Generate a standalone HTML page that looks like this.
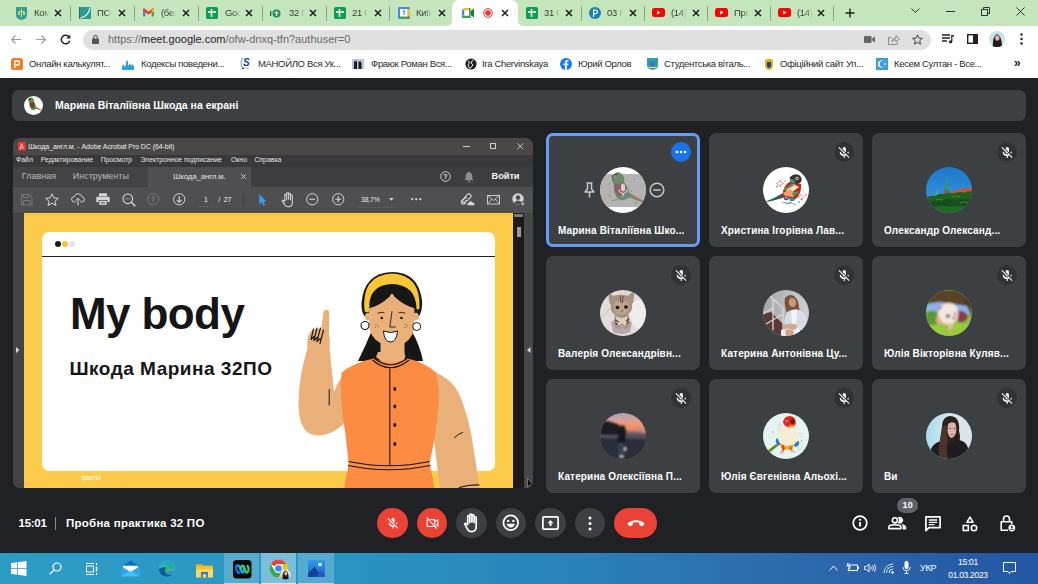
<!DOCTYPE html>
<html lang="uk">
<head>
<meta charset="utf-8">
<title>Meet</title>
<style>
*{box-sizing:border-box;margin:0;padding:0}
html,body{width:1038px;height:584px;overflow:hidden;background:#202124;font-family:"Liberation Sans",sans-serif}
.abs{position:absolute}
svg{position:absolute;overflow:visible}
#tabstrip{position:absolute;left:0;top:0;width:1038px;height:26px;background:#c5e6bd}
#toolbar{position:absolute;left:0;top:26px;width:1038px;height:26px;background:#fff}
#bookmarks{position:absolute;left:0;top:52px;width:1038px;height:26px;background:#fff}
#meet{position:absolute;left:0;top:78px;width:1038px;height:475px;background:#202124}
#taskbar{position:absolute;left:0;top:553px;width:1038px;height:31px;background:linear-gradient(90deg,#2c9cc5 0%,#2a96c3 32%,#2a80ba 56%,#2c66ab 80%,#2357a4 100%)}
.tt{position:absolute;top:7px;height:14px;font-size:9.5px;color:#3a3a3a;white-space:nowrap;overflow:hidden;letter-spacing:-0.3px}
.tx{position:absolute;top:9px;width:8px;height:8px}
.sep{position:absolute;top:6px;width:1px;height:15px;background:#86a481}
.bm{position:absolute;top:58px;font-size:9.5px;line-height:12px;color:#2a2a2a;white-space:nowrap;letter-spacing:-0.33px}
#banner{position:absolute;left:12px;top:12px;width:1014px;height:31px;background:#3c4043;border-radius:7px}
#banner .txt{position:absolute;left:43px;top:9px;font-size:10.500px;line-height:13px;font-weight:bold;color:#fff;white-space:nowrap}
.tile{position:absolute;width:154px;height:114px;background:#3c4043;border-radius:7px}
.tile .nm{position:absolute;left:12px;top:92px;font-size:10px;line-height:12px;font-weight:bold;color:#fff;white-space:nowrap;letter-spacing:0.15px}
.tile .av{position:absolute;left:54px;top:34px;width:46px;height:46px;border-radius:50%;overflow:hidden}
.tile .mic{position:absolute;left:125px;top:9px;width:20px;height:20px;border-radius:50%;background:#303236}
</style>
</head>
<body>
<div id="tabstrip">
<div class="abs" style="left:452px;top:0;width:66px;height:26px;background:#fff;border-radius:7px 7px 0 0"></div>
<svg style="left:446px;top:20px" width="6" height="6" viewBox="0 0 6 6"><path d="M6 0V6H0Q6 6 6 0Z" fill="#fff"/></svg>
<svg style="left:518px;top:20px" width="6" height="6" viewBox="0 0 6 6"><path d="M0 0V6H6Q0 6 0 0Z" fill="#fff"/></svg>
<svg style="left:16px;top:7px" width="11" height="13" viewBox="0 0 11 13"><path d="M0 0H11V8Q11 12 5.5 13Q0 12 0 8Z" fill="#2f9f9a"/><path d="M5.5 2V10M3 4.5H8M3 4.5L2.4 7.5H3.8ZM8 4.500L7.300 7.5H8.700Z" stroke="#f3e27a" stroke-width="0.9" fill="none"/></svg>
<div class="tt" style="left:34px;width:16px;-webkit-mask-image:linear-gradient(90deg,#000 55%,transparent 98%)">Ком</div>
<svg class="tx" style="left:54px" viewBox="0 0 8 8"><path d="M1 1L7 7M7 1L1 7" stroke="#1f1f1f" stroke-width="1.5" fill="none"/></svg>
<div class="sep" style="left:70px"></div>
<svg style="left:79px;top:7px" width="12" height="12" viewBox="0 0 12 12"><rect width="12" height="12" fill="#2f9c93"/><rect width="1" height="12" fill="#1c6e66"/><path d="M1.500 11Q9.500 9.500 11 0.500" stroke="#fff" stroke-width="1.100" fill="none"/></svg>
<div class="tt" style="left:97px;width:16px;-webkit-mask-image:linear-gradient(90deg,#000 55%,transparent 98%)">ПС-</div>
<svg class="tx" style="left:118px" viewBox="0 0 8 8"><path d="M1 1L7 7M7 1L1 7" stroke="#1f1f1f" stroke-width="1.5" fill="none"/></svg>
<div class="sep" style="left:134px"></div>
<svg style="left:143px;top:8px" width="11" height="9" viewBox="0 0 11 9"><path d="M0 1.200V8.500H2.300V3.400Z" fill="#4285f4"/><path d="M11 1.200V8.500H8.700V3.400Z" fill="#34a853"/><path d="M0 1.200Q0.300 0 1.600 0.400L5.500 3.500L9.400 0.400Q10.700 0 11 1.200V3.400L5.500 6.600L0 3.400Z" fill="#ea4335"/><path d="M8.700 1L11 1.200V3.400L8.700 4.800Z" fill="#fbbc04"/></svg>
<div class="tt" style="left:161px;width:16px;-webkit-mask-image:linear-gradient(90deg,#000 55%,transparent 98%)">(без</div>
<svg class="tx" style="left:182px" viewBox="0 0 8 8"><path d="M1 1L7 7M7 1L1 7" stroke="#1f1f1f" stroke-width="1.5" fill="none"/></svg>
<div class="sep" style="left:198px"></div>
<svg style="left:206px;top:7px" width="12" height="12" viewBox="0 0 12 12"><rect width="12" height="12" rx="1.500" fill="#0f9d58"/><path d="M5.500 2V10M2 5H10" stroke="#fff" stroke-width="1.500" fill="none"/></svg>
<div class="tt" style="left:225px;width:16px;-webkit-mask-image:linear-gradient(90deg,#000 55%,transparent 98%)">Goo</div>
<svg class="tx" style="left:245px" viewBox="0 0 8 8"><path d="M1 1L7 7M7 1L1 7" stroke="#1f1f1f" stroke-width="1.5" fill="none"/></svg>
<div class="sep" style="left:262px"></div>
<svg style="left:270px;top:9px" width="11" height="9" viewBox="0 0 11 9"><circle cx="6.500" cy="4.500" r="4" fill="#1e8e5a"/><path d="M6.500 2V7M4.500 4H8.500" stroke="#fff" stroke-width="1.200"/><rect x="0" y="2" width="1.300" height="5" fill="#1e6b47"/></svg>
<div class="tt" style="left:289px;width:16px;-webkit-mask-image:linear-gradient(90deg,#000 55%,transparent 98%)">32 Г</div>
<svg class="tx" style="left:309px" viewBox="0 0 8 8"><path d="M1 1L7 7M7 1L1 7" stroke="#1f1f1f" stroke-width="1.5" fill="none"/></svg>
<div class="sep" style="left:326px"></div>
<svg style="left:334px;top:7px" width="12" height="12" viewBox="0 0 12 12"><rect width="12" height="12" rx="1.500" fill="#0f9d58"/><path d="M5.500 2V10M2 5H10" stroke="#fff" stroke-width="1.500" fill="none"/></svg>
<div class="tt" style="left:352px;width:16px;-webkit-mask-image:linear-gradient(90deg,#000 55%,transparent 98%)">21 Г</div>
<svg class="tx" style="left:374px" viewBox="0 0 8 8"><path d="M1 1L7 7M7 1L1 7" stroke="#1f1f1f" stroke-width="1.5" fill="none"/></svg>
<div class="sep" style="left:389px"></div>
<svg style="left:398px;top:7px" width="12" height="12" viewBox="0 0 12 12"><rect width="12" height="12" rx="1.500" fill="#4285f4"/><rect x="9.500" y="2" width="2.500" height="8" fill="#fbbc04"/><rect x="2" y="9.500" width="8" height="2.500" fill="#34a853"/><path d="M9.500 9.500H12L9.500 12Z" fill="#ea4335"/><rect x="2" y="2" width="7.500" height="7.500" fill="#fff"/><path d="M5 4.500L6.200 3.700V8" stroke="#4285f4" stroke-width="1.100" fill="none"/></svg>
<div class="tt" style="left:416px;width:16px;-webkit-mask-image:linear-gradient(90deg,#000 55%,transparent 98%)">Київ</div>
<svg class="tx" style="left:438px" viewBox="0 0 8 8"><path d="M1 1L7 7M7 1L1 7" stroke="#1f1f1f" stroke-width="1.5" fill="none"/></svg>
<svg style="left:526px;top:7px" width="12" height="12" viewBox="0 0 12 12"><rect width="12" height="12" rx="1.500" fill="#0f9d58"/><path d="M5.500 2V10M2 5H10" stroke="#fff" stroke-width="1.500" fill="none"/></svg>
<div class="tt" style="left:544px;width:16px;-webkit-mask-image:linear-gradient(90deg,#000 55%,transparent 98%)">31 Г</div>
<svg class="tx" style="left:565px" viewBox="0 0 8 8"><path d="M1 1L7 7M7 1L1 7" stroke="#1f1f1f" stroke-width="1.5" fill="none"/></svg>
<div class="sep" style="left:581px"></div>
<svg style="left:589px;top:7px" width="12" height="12" viewBox="0 0 12 12"><circle cx="6" cy="6" r="6" fill="#1b7eb5"/><path d="M4.600 10V3H6.500Q8.400 3 8.400 4.800Q8.400 6.600 6.500 6.600H4.600" stroke="#fff" stroke-width="1.200" fill="none"/></svg>
<div class="tt" style="left:607px;width:16px;-webkit-mask-image:linear-gradient(90deg,#000 55%,transparent 98%)">03 F</div>
<svg class="tx" style="left:629px" viewBox="0 0 8 8"><path d="M1 1L7 7M7 1L1 7" stroke="#1f1f1f" stroke-width="1.5" fill="none"/></svg>
<div class="sep" style="left:644px"></div>
<svg style="left:652px;top:8px" width="13" height="9" viewBox="0 0 13 9"><rect width="13" height="9" rx="2.500" fill="#f00"/><path d="M5.200 2.500L8.500 4.500L5.200 6.500Z" fill="#fff"/></svg>
<div class="tt" style="left:671px;width:16px;-webkit-mask-image:linear-gradient(90deg,#000 55%,transparent 98%)">(14)</div>
<svg class="tx" style="left:692px" viewBox="0 0 8 8"><path d="M1 1L7 7M7 1L1 7" stroke="#1f1f1f" stroke-width="1.5" fill="none"/></svg>
<div class="sep" style="left:707px"></div>
<svg style="left:715px;top:8px" width="13" height="9" viewBox="0 0 13 9"><rect width="13" height="9" rx="2.500" fill="#f00"/><path d="M5.200 2.500L8.500 4.500L5.200 6.500Z" fill="#fff"/></svg>
<div class="tt" style="left:734px;width:16px;-webkit-mask-image:linear-gradient(90deg,#000 55%,transparent 98%)">Про</div>
<svg class="tx" style="left:754px" viewBox="0 0 8 8"><path d="M1 1L7 7M7 1L1 7" stroke="#1f1f1f" stroke-width="1.5" fill="none"/></svg>
<div class="sep" style="left:770px"></div>
<svg style="left:778px;top:8px" width="13" height="9" viewBox="0 0 13 9"><rect width="13" height="9" rx="2.500" fill="#f00"/><path d="M5.200 2.500L8.500 4.500L5.200 6.500Z" fill="#fff"/></svg>
<div class="tt" style="left:797px;width:16px;-webkit-mask-image:linear-gradient(90deg,#000 55%,transparent 98%)">(14)</div>
<svg class="tx" style="left:817px" viewBox="0 0 8 8"><path d="M1 1L7 7M7 1L1 7" stroke="#1f1f1f" stroke-width="1.5" fill="none"/></svg>
<div class="sep" style="left:833px"></div>
<svg style="left:462px;top:8px" width="12" height="10" viewBox="0 0 12 10"><path d="M0 2.500L2.500 0V2.500Z" fill="#ea4335"/><rect x="2.500" y="0" width="6" height="2.500" fill="#fbbc04"/><rect x="0" y="2.500" width="2.500" height="5" fill="#4285f4"/><rect x="0" y="7.500" width="8.500" height="2.500" fill="#34a853"/><path d="M8.500 0V10H7V0Z" fill="#34a853"/><path d="M8.500 3L12 0.500V9.500L8.500 7Z" fill="#188038"/><rect x="2.500" y="2.500" width="4.500" height="5" fill="#fff"/></svg>
<svg style="left:483px;top:8px" width="10" height="10" viewBox="0 0 10 10"><circle cx="5" cy="5" r="4.400" fill="none" stroke="#e53935" stroke-width="1"/><circle cx="5" cy="5" r="2.800" fill="#e53935"/></svg>
<svg class="tx" style="left:501px" viewBox="0 0 8 8"><path d="M1 1L7 7M7 1L1 7" stroke="#1f1f1f" stroke-width="1.5" fill="none"/></svg>
<svg style="left:845px;top:8px" width="10" height="10" viewBox="0 0 10 10"><path d="M5 0.500V9.500M0.500 5H9.500" stroke="#1f1f1f" stroke-width="1.400" fill="none"/></svg>
<svg style="left:911px;top:8px" width="9" height="6" viewBox="0 0 9 6"><path d="M0.500 0.500L4.500 4.500L8.500 0.500" stroke="#333" stroke-width="1" fill="none"/></svg>
<div class="abs" style="left:946px;top:11px;width:9px;height:1px;background:#333"></div>
<svg style="left:981px;top:7px" width="9" height="9" viewBox="0 0 9 9"><rect x="0.500" y="2.500" width="6" height="6" fill="none" stroke="#333" stroke-width="1"/><path d="M2.500 2.500V0.500H8.500V6.500H6.500" fill="none" stroke="#333" stroke-width="1"/></svg>
<svg style="left:1016px;top:7px" width="9" height="9" viewBox="0 0 9 9"><path d="M0.500 0.500L8.500 8.500M8.500 0.500L0.500 8.500" stroke="#333" stroke-width="1" fill="none"/></svg>
</div>
<div id="toolbar">
<svg style="left:11px;top:9px" width="10" height="9" viewBox="0 0 10 9"><path d="M10 4.500H1M4.500 0.500L0.700 4.500L4.500 8.500" stroke="#9a9a9a" stroke-width="1.200" fill="none"/></svg>
<svg style="left:36px;top:9px" width="10" height="9" viewBox="0 0 10 9"><path d="M0 4.500H9M5.500 0.500L9.300 4.500L5.500 8.500" stroke="#9a9a9a" stroke-width="1.200" fill="none"/></svg>
<svg style="left:60px;top:8px" width="11" height="11" viewBox="0 0 11 11"><path d="M9.300 3.300A4.300 4.300 0 1 0 9.700 6.800" stroke="#222" stroke-width="1.500" fill="none"/><path d="M10.300 0.600V4.600H6.300Z" fill="#222"/></svg>
<div class="abs" style="left:83px;top:3.500px;width:848px;height:20.500px;border-radius:10.250px;background:#e0e0e0"></div>
<svg style="left:92px;top:9px" width="7" height="9" viewBox="0 0 7 9"><rect x="0" y="3.500" width="7" height="5.500" rx="0.800" fill="#555"/><path d="M1.700 4V2.300A1.800 1.800 0 0 1 5.300 2.300V4" stroke="#555" stroke-width="1.100" fill="none"/></svg>
<div class="abs" id="url" style="left:108px;top:7px;font-size:11px;line-height:13px;color:#6a6a6a;white-space:nowrap;letter-spacing:0">https://<span style="color:#1f1f1f">meet.google.com</span>/ofw-dnxq-tfn?authuser=0</div>
<svg style="left:864px;top:10px" width="11" height="7" viewBox="0 0 11 7"><rect width="7.500" height="7" rx="1" fill="#666"/><path d="M7.500 3L11 0.500V6.500L7.500 4Z" fill="#666"/></svg>
<svg style="left:888px;top:8px" width="12" height="11" viewBox="0 0 12 11"><path d="M3 3.500H0.500V10.500H9.500V8" stroke="#8a8a8a" stroke-width="1" fill="none"/><path d="M3.500 8Q4 4 8 3.800V1.500L11.500 4.800L8 8V5.800Q5 5.800 3.500 8Z" stroke="#8a8a8a" stroke-width="1" fill="none"/></svg>
<svg style="left:912px;top:8px" width="11" height="11" viewBox="0 0 11 11"><path d="M5.500 0.800L6.900 4.100L10.400 4.400L7.700 6.700L8.500 10.200L5.500 8.300L2.500 10.200L3.300 6.700L0.600 4.400L4.100 4.100Z" stroke="#444" stroke-width="1" fill="none"/></svg>
<svg style="left:942px;top:8px" width="12" height="10" viewBox="0 0 12 10"><path d="M0 1H8M0 4H8M0 7H5" stroke="#222" stroke-width="1.300"/><path d="M9.800 1V7.500" stroke="#222" stroke-width="1.200"/><circle cx="8.600" cy="7.800" r="1.600" fill="#222"/><path d="M9.800 1H12V2.500H9.800Z" fill="#222"/></svg>
<svg style="left:967px;top:8px" width="11" height="10" viewBox="0 0 11 10"><rect x="0.700" y="0.700" width="9.600" height="8.600" fill="#fff" stroke="#222" stroke-width="1.400"/><rect x="6" y="0.700" width="4.300" height="8.600" fill="#222"/></svg>
<svg style="left:989px;top:5px" width="16" height="16" viewBox="0 0 16 16"><defs><clipPath id="avc"><circle cx="8" cy="8" r="8"/></clipPath></defs><g clip-path="url(#avc)"><rect width="16" height="16" fill="#c9e3ee"/><path d="M4 16Q3 6 8 3Q13 5 13 16Z" fill="#2a1c1a"/><ellipse cx="8.300" cy="7" rx="2.200" ry="2.800" fill="#e2b7a0"/><path d="M3 16Q4 11 8 11.500Q12 11 14 16Z" fill="#1c1c20"/></g></svg>
<svg style="left:1020px;top:7px" width="3" height="12" viewBox="0 0 3 12"><circle cx="1.500" cy="1.500" r="1.200" fill="#222"/><circle cx="1.500" cy="6" r="1.200" fill="#222"/><circle cx="1.500" cy="10.500" r="1.200" fill="#222"/></svg>
</div>
<div id="bookmarks"></div>
<div class="bm" id="bm0" style="left:29px">Онлайн калькулят...</div>
<div class="bm" id="bm1" style="left:141px">Кодексы поведени...</div>
<div class="bm" id="bm2" style="left:258px">МАНОЙЛО Вся Ук...</div>
<div class="bm" id="bm3" style="left:371px">Фраюк Роман Вся...</div>
<div class="bm" id="bm4" style="left:482px">Ira Chervinskaya</div>
<div class="bm" id="bm5" style="left:578px">Юрий Орлов</div>
<div class="bm" id="bm6" style="left:664px">Студентська віталь...</div>
<div class="bm" id="bm7" style="left:780px">Офіційний сайт Уп...</div>
<div class="bm" id="bm8" style="left:894px">Кесем Султан - Все...</div>
<svg style="left:11px;top:58px" width="12" height="12" viewBox="0 0 12 12"><rect width="12" height="12" rx="2.500" fill="#f57c1f"/><path d="M4 10V3H6.500Q8.500 3 8.500 5Q8.500 7 6.500 7H4" stroke="#fff" stroke-width="1.300" fill="none"/></svg>
<svg style="left:122px;top:58px" width="13" height="12" viewBox="0 0 13 12"><path d="M0 12V8L2 6V9L4 7V4L5 2L6 4V8L8 5L9 8L10 6L12 8V12Z" fill="#2f9fe0"/></svg>
<svg style="left:240px;top:57px" width="12" height="13" viewBox="0 0 12 13"><text x="3" y="9" font-family="Liberation Sans,sans-serif" font-size="10" font-weight="bold" font-style="italic" fill="#1f3aa8">S</text><path d="M2.500 1Q0 5 1.500 10" stroke="#5a8ad8" stroke-width="0.900" fill="none"/><rect x="2" y="10.500" width="2" height="1.500" fill="#1f3aa8"/><rect x="5" y="10.500" width="4" height="1" fill="#9ab"/></svg>
<svg style="left:352px;top:59px" width="12" height="10" viewBox="0 0 12 10"><rect width="12" height="10" fill="#b9c4d6"/><path d="M2 10V3L4 1.500L5 3V10ZM6.500 10V2.500H8.500L9.500 4V10Z" fill="#1a1a2a"/></svg>
<svg style="left:465px;top:58px" width="12" height="12" viewBox="0 0 12 12"><circle cx="6" cy="6" r="5.600" fill="#1f1f1f"/><path d="M3 2.500Q5 4 4 5.500Q2.500 6.500 3.500 8.500L5 10.500Q6 8.500 7.500 8Q8.500 6.500 7 6Q5.500 5 6.500 3.500Q8 3 8.500 1.800" stroke="#fff" stroke-width="1" fill="none"/></svg>
<svg style="left:560px;top:58px" width="12" height="12" viewBox="0 0 12 12"><circle cx="6" cy="6" r="6" fill="#1877f2"/><path d="M6.700 12V7.300H8.200L8.500 5.500H6.700V4.500Q6.700 3.600 7.700 3.600H8.500V2.100Q7.800 2 7.100 2Q5 2 5 4.200V5.500H3.500V7.300H5V12Z" fill="#fff"/></svg>
<svg style="left:647px;top:58px" width="11" height="12" viewBox="0 0 11 12"><path d="M0 0H11V7.500Q11 11 5.500 12Q0 11 0 7.500Z" fill="#2fa39a"/><path d="M2.500 3H8.500V6Q8.500 8 5.500 8.500Q2.500 8 2.500 6Z" fill="#3a7bd0"/><path d="M1.500 9.500H9.500" stroke="#f3e27a" stroke-width="1"/></svg>
<svg style="left:764px;top:58px" width="10" height="12" viewBox="0 0 10 12"><path d="M1 2L5 0.500L9 2V8Q9 11 5 12Q1 11 1 8Z" fill="#d9b21c"/><path d="M3 4H7V8Q7 9.500 5 10Q3 9.500 3 8Z" fill="#2a3a8a"/></svg>
<svg style="left:876px;top:58px" width="12" height="12" viewBox="0 0 12 12"><rect width="12" height="12" fill="#3a9fd0"/><circle cx="5.500" cy="6" r="3.600" fill="#fff"/><circle cx="6.600" cy="6" r="3" fill="#3a9fd0"/><circle cx="9" cy="6" r="0.900" fill="#fff"/></svg>
<div class="abs" style="left:1014px;top:57px;font-size:12px;font-weight:bold;color:#222;line-height:12px">»</div>
<div id="meet">
<div id="banner"><div class="abs" style="left:12px;top:6px;width:19px;height:19px;border-radius:50%;overflow:hidden;background:#fff"><svg width="19" height="19" viewBox="2 2 42 42"><g><path d="M28 25Q36 30 44 34L41 35Q33 32 26 29Z" fill="#b8792f"/><path d="M13 8Q17 3 22 7Q25 10 24 15Q30 22 29 30Q24 35 18 32Q13 26 14 17Q10 13 13 8Z" fill="#4f9a3a"/><path d="M14 16Q18 19 24 15Q27 22 24 28Q18 30 15 24Z" fill="#8c2f3a"/><path d="M11.500 9Q14 6 18 6.500L16 11L12 12Z" fill="#3a3f2a"/></g></svg></div><div class="txt">Марина Віталіївна Шкода на екрані</div></div>
<div id="share" class="abs" style="left:13px;top:60px;width:520px;height:350px;background:#3a3a3c;border-radius:7px;overflow:hidden;font-family:'Liberation Sans',sans-serif">
<div class="abs" style="left:0;top:0;width:520px;height:16.500px;background:#4a4747"></div>
<svg style="left:4.800px;top:3.600px" width="7.500" height="8.800" viewBox="0 0 7.500 8.800"><rect width="7.500" height="8.800" rx="1" fill="#e8382e"/><path d="M1.500 6.800Q3.300 4.500 3.500 1.800Q4 4.500 6 5.800Q3.500 5.500 1.500 6.800Z" stroke="#fff" stroke-width="0.700" fill="none"/></svg>
<div class="abs" id="atitle" style="left:15.200px;top:4.300px;font-size:7px;line-height:9px;color:#ececec;white-space:nowrap;letter-spacing:-0.070px">Шкода_англ.м. - Adobe Acrobat Pro DC (64-bit)</div>
<div class="abs" style="left:449.500px;top:7.500px;width:7px;height:1px;background:#d0d0d0"></div>
<div class="abs" style="left:477px;top:4.800px;width:6px;height:6px;border:1px solid #d0d0d0"></div>
<svg style="left:503.500px;top:4.500px" width="6.500" height="6.500" viewBox="0 0 6.500 6.500"><path d="M0.300 0.300L6.200 6.200M6.200 0.300L0.300 6.200" stroke="#d8d8d8" stroke-width="0.900"/></svg>
<div class="abs" style="left:0;top:16.500px;width:520px;height:12.300px;background:#39393b"></div>
<div class="abs am" id="am0" style="left:3.0px;top:18.300px;font-size:6.900px;line-height:8px;color:#e6e6e6;white-space:nowrap;letter-spacing:0">Файл</div>
<div class="abs am" id="am1" style="left:27.7px;top:18.300px;font-size:6.900px;line-height:8px;color:#e6e6e6;white-space:nowrap;letter-spacing:0">Редактирование</div>
<div class="abs am" id="am2" style="left:87.7px;top:18.300px;font-size:6.900px;line-height:8px;color:#e6e6e6;white-space:nowrap;letter-spacing:0">Просмотр</div>
<div class="abs am" id="am3" style="left:127.4px;top:18.300px;font-size:6.900px;line-height:8px;color:#e6e6e6;white-space:nowrap;letter-spacing:0">Электронное подписание</div>
<div class="abs am" id="am4" style="left:218.0px;top:18.300px;font-size:6.900px;line-height:8px;color:#e6e6e6;white-space:nowrap;letter-spacing:0">Окно</div>
<div class="abs am" id="am5" style="left:241.4px;top:18.300px;font-size:6.900px;line-height:8px;color:#e6e6e6;white-space:nowrap;letter-spacing:0">Справка</div>
<div class="abs" style="left:0;top:28.800px;width:520px;height:20px;background:#3d3d3f"></div>
<div class="abs" style="left:0;top:28.800px;width:134.500px;height:20px;background:#434345"></div>
<div class="abs" style="left:134.500px;top:28.800px;width:103.500px;height:20px;background:#4f4f51"></div>
<div class="abs" id="atab0" style="left:8.800px;top:33px;font-size:9px;line-height:11px;color:#b8b8b8;white-space:nowrap;letter-spacing:0">Главная</div>
<div class="abs" id="atab1" style="left:59.800px;top:33px;font-size:9px;line-height:11px;color:#b8b8b8;white-space:nowrap;letter-spacing:0">Инструменты</div>
<div class="abs" id="atab2" style="left:160.300px;top:33.500px;font-size:7.800px;line-height:10px;color:#e4e4e4;white-space:nowrap;letter-spacing:-0.100px">Шкода_англ.м.</div>
<svg style="left:227.700px;top:35.500px" width="5" height="5" viewBox="0 0 5 5"><path d="M0.300 0.300L4.700 4.700M4.700 0.300L0.300 4.700" stroke="#ddd" stroke-width="0.900"/></svg>
<svg style="left:427.100px;top:32.800px" width="11" height="11" viewBox="0 0 11 11"><circle cx="5.500" cy="5.500" r="4.800" stroke="#e0e0e0" stroke-width="0.900" fill="none"/><text x="5.500" y="8" font-size="7" font-weight="bold" fill="#e0e0e0" text-anchor="middle" font-family="Liberation Sans,sans-serif">?</text></svg>
<svg style="left:451px;top:32.500px" width="10" height="11.500" viewBox="0 0 10 11.500"><path d="M5 0.500Q5.800 0.500 5.800 1.300Q8.300 2 8.300 5V7.500L9.600 9.300H0.400L1.700 7.500V5Q1.700 2 4.200 1.300Q4.200 0.500 5 0.500ZM3.800 10H6.200Q6 11.200 5 11.200Q4 11.200 3.800 10Z" fill="#8e8e8e"/></svg>
<div class="abs" id="login" style="left:478.600px;top:33px;font-size:9.300px;line-height:11px;font-weight:bold;color:#f2f2f2;white-space:nowrap;letter-spacing:-0.100px">Войти</div>
<div class="abs" style="left:0;top:48.800px;width:520px;height:26.500px;background:#4f4f51"></div>
<svg style="left:8.4px;top:55.8px" width="11.5" height="11.5" viewBox="0 0 11.5 11.5"><path d="M0.500 0.500H8.500L11 3V11H0.500Z" stroke="#7c7c7e" stroke-width="0.900" fill="none"/><path d="M2.500 0.500V3.500H7.500V0.500M2.500 11V6.500H9V11" stroke="#7c7c7e" stroke-width="0.900" fill="none"/></svg>
<svg style="left:32.1px;top:55.1px" width="14" height="13" viewBox="0 0 14 13"><path d="M7 0.800L8.900 4.900L13.300 5.300L9.900 8.200L11 12.500L7 10.200L3 12.500L4.100 8.200L0.700 5.300L5.100 4.900Z" stroke="#d6d6d6" stroke-width="1" fill="none" stroke-linejoin="round"/></svg>
<svg style="left:57.6px;top:55.1px" width="14" height="13" viewBox="0 0 14 13"><path d="M4.500 9H3.500Q0.600 9 0.600 6.300Q0.600 3.900 3.200 3.700Q4 0.700 7 0.700Q10.200 0.700 10.800 3.700Q13.400 3.900 13.400 6.300Q13.400 9 10.500 9H9.500" stroke="#d6d6d6" stroke-width="1" fill="none"/><path d="M7 12.500V5.500M4.600 7.700L7 5.300L9.400 7.700" stroke="#d6d6d6" stroke-width="1" fill="none"/></svg>
<svg style="left:82.8px;top:55.3px" width="14" height="12.5" viewBox="0 0 14 12.5"><rect x="3" y="0.300" width="8" height="3" fill="#d6d6d6"/><rect x="0.300" y="3.800" width="13.400" height="5.500" rx="0.800" fill="#d6d6d6"/><rect x="3" y="7.500" width="8" height="4.700" fill="#d6d6d6" stroke="#4f4f51" stroke-width="0.800"/><rect x="5" y="9.300" width="4" height="1" fill="#4f4f51"/></svg>
<svg style="left:108.6px;top:54.6px" width="14" height="14" viewBox="0 0 14 14"><circle cx="5.800" cy="5.800" r="4.800" stroke="#d6d6d6" stroke-width="1.100" fill="none"/><path d="M9.300 9.300L13.300 13.300" stroke="#d6d6d6" stroke-width="1.400"/><circle cx="3.800" cy="5.800" r="0.550" fill="#d6d6d6"/><circle cx="5.800" cy="5.800" r="0.550" fill="#d6d6d6"/><circle cx="7.800" cy="5.800" r="0.550" fill="#d6d6d6"/></svg>
<svg style="left:134.3px;top:55.3px" width="12.5" height="12.5" viewBox="0 0 12.5 12.5"><circle cx="6.250" cy="6.250" r="5.600" stroke="#7c7c7e" stroke-width="0.900" fill="none"/><path d="M6.250 9.500V3.300M3.800 5.600L6.250 3.200L8.700 5.600" stroke="#7c7c7e" stroke-width="0.900" fill="none"/></svg>
<svg style="left:159.8px;top:55.3px" width="12.5" height="12.5" viewBox="0 0 12.5 12.5"><circle cx="6.250" cy="6.250" r="5.600" stroke="#d6d6d6" stroke-width="1" fill="none"/><path d="M6.250 3V9.200M3.800 6.900L6.250 9.300L8.700 6.900" stroke="#d6d6d6" stroke-width="1.100" fill="none"/></svg>
<div class="abs" style="left:191px;top:57.099999999999994px;font-size:7px;line-height:9px;color:#eee">1</div>
<div class="abs" style="left:185.5px;top:68.4px;width:15px;height:1px;background:#5e5e60"></div>
<div class="abs" style="left:205.3px;top:57.099999999999994px;font-size:7px;line-height:9px;color:#eee;white-space:nowrap;letter-spacing:-0.100px">/&nbsp; 27</div>
<div class="abs" style="left:230.3px;top:54.5px;width:1px;height:14.500px;background:#3e3e40"></div>
<svg style="left:246.1px;top:55.6px" width="7.5" height="12" viewBox="0 0 7.5 12"><path d="M0.300 0.300V10.200L2.800 7.900L4.600 11.700L6 11L4.300 7.400H7.300Z" fill="#3d9cf4"/></svg>
<svg style="left:267.4px;top:53.8px" width="14.5" height="15.5" viewBox="-1 0 13 14"><path d="M3.300 8V2.800A0.850 0.850 0 0 1 5 2.800V7M5 6.500V1.500A0.850 0.850 0 0 1 6.700 1.500V6.500M6.700 6.500V2A0.850 0.850 0 0 1 8.400 2V7M8.400 7V3.500A0.850 0.850 0 0 1 10.100 3.500V9.500Q10.100 13.300 6.500 13.300Q4.200 13.300 3 11.200L0.900 7.800Q1.800 6.800 3.300 8.500" stroke="#d6d6d6" stroke-width="0.950" fill="none" stroke-linejoin="round" stroke-linecap="round"/></svg>
<svg style="left:293.1px;top:55.3px" width="12.5" height="12.5" viewBox="0 0 12.5 12.5"><circle cx="6.250" cy="6.250" r="5.600" stroke="#d6d6d6" stroke-width="1" fill="none"/><path d="M3.300 6.250H9.200" stroke="#d6d6d6" stroke-width="1.100"/></svg>
<svg style="left:318.9px;top:55.3px" width="12.5" height="12.5" viewBox="0 0 12.5 12.5"><circle cx="6.250" cy="6.250" r="5.600" stroke="#d6d6d6" stroke-width="1" fill="none"/><path d="M3.300 6.250H9.200M6.250 3.300V9.200" stroke="#d6d6d6" stroke-width="1.100"/></svg>
<div class="abs" id="zoomp" style="left:348px;top:57.099999999999994px;font-size:6.800px;line-height:9px;color:#e8e8e8;white-space:nowrap;letter-spacing:-0.150px">38,7%</div>
<div class="abs" style="left:345px;top:69px;width:38px;height:1px;background:#5a5a5c"></div>
<svg style="left:376.2px;top:60.2px" width="4.6" height="2.8" viewBox="0 0 4.6 2.8"><path d="M0 0H4.600L2.300 2.800Z" fill="#d6d6d6"/></svg>
<svg style="left:398.2px;top:60.4px" width="10.5" height="2.4" viewBox="0 0 10.5 2.4"><circle cx="1.200" cy="1.200" r="1.100" fill="#d6d6d6"/><circle cx="5.250" cy="1.200" r="1.100" fill="#d6d6d6"/><circle cx="9.300" cy="1.200" r="1.100" fill="#d6d6d6"/></svg>
<svg style="left:448.2px;top:55.3px" width="14" height="12.5" viewBox="0 0 14 12.5"><path d="M5.500 6.800L2.900 9.400A1.900 1.900 0 0 1 0.900 7L4 3.900" stroke="#d6d6d6" stroke-width="1.100" fill="none" transform="translate(0.500 0.500)"/><path d="M3.600 4.400L6.200 1.600A2.100 2.100 0 0 1 9.300 4.700L6.300 7.700A2.100 2.100 0 0 1 3.700 7.900M6.200 5.200A2.100 2.100 0 0 0 3.200 5.300L0.900 7.700A2.100 2.100 0 0 0 3.900 10.700L4.800 9.800" stroke="#d6d6d6" stroke-width="1.100" fill="none"/><path d="M7.500 12.300Q6.300 12.300 6.300 11.100Q6.300 10 7.500 9.900Q7.900 8.200 9.700 8.200Q11.500 8.200 11.900 9.800Q13.700 9.800 13.700 11.100Q13.700 12.300 12.500 12.300Z" fill="#d6d6d6"/></svg>
<svg style="left:473.7px;top:56.8px" width="13" height="9.5" viewBox="0 0 13 9.5"><rect x="0.500" y="0.500" width="12" height="8.500" stroke="#d6d6d6" stroke-width="0.900" fill="none"/><path d="M0.500 0.500L6.500 5.500L12.500 0.500M0.500 9L4.800 4.200M12.500 9L8.200 4.200" stroke="#d6d6d6" stroke-width="0.800" fill="none"/></svg>
<svg style="left:499.1px;top:55.1px" width="13" height="13" viewBox="0 0 13 13"><circle cx="6" cy="6" r="5.700" fill="#d6d6d6"/><circle cx="6" cy="4.600" r="2.300" fill="#4f4f51"/><path d="M2 10.300Q3 7.600 6 7.600Q9 7.600 10 10.300Q8 11.700 6 11.700Q4 11.700 2 10.300Z" fill="#4f4f51"/><circle cx="10.800" cy="10.800" r="2.600" fill="#4f4f51"/><path d="M10.800 9.200V12.400M9.200 10.800H12.400" stroke="#d6d6d6" stroke-width="0.900"/></svg>
<div class="abs" style="left:0;top:75.300px;width:10.800px;height:276px;background:#454244"></div>
<svg style="left:3px;top:209px" width="3.500" height="6" viewBox="0 0 3.500 6"><path d="M0 0L3.500 3L0 6Z" fill="#d8d8d8"/></svg>
<div class="abs" style="left:10.800px;top:75.300px;width:489.400px;height:276px;background:#fdcb4a"></div>
<div class="abs" style="left:500.100px;top:75.300px;width:10.900px;height:276px;background:#1c1a1b"></div>
<div class="abs" style="left:501.200px;top:75.900px;width:9px;height:3.600px;background:#7a7a7a"></div>
<div class="abs" style="left:504px;top:89.19999999999999px;width:3.800px;height:9.800px;background:#9a9898"></div>
<div class="abs" style="left:511px;top:75.300px;width:9px;height:276px;background:#474747"></div>
<svg style="left:513.5px;top:209px" width="3.500" height="6" viewBox="0 0 3.500 6"><path d="M3.500 0L0 3L3.500 6Z" fill="#d8d8d8"/></svg>
<div class="abs" style="left:28.799999999999997px;top:93.5px;width:452.800px;height:239.100px;background:#fff;border-radius:7px"></div>
<div class="abs" style="left:28.799999999999997px;top:118.39999999999998px;width:453.500px;height:0.800px;background:#222"></div>
<div class="abs" style="left:42.3px;top:102.5px;width:6px;height:6px;border-radius:50%;background:#1a1a1a"></div>
<div class="abs" style="left:49px;top:102.5px;width:6px;height:6px;border-radius:50%;background:#f6c33c"></div>
<div class="abs" style="left:55.5px;top:102.5px;width:6px;height:6px;border-radius:50%;background:#e6e6e6"></div>
<div class="abs" id="mybody" style="left:57px;top:152px;font-size:44px;line-height:48px;font-weight:bold;color:#151515;white-space:nowrap;letter-spacing:-0.600px">My body</div>
<div class="abs" id="subt" style="left:56.5px;top:220px;font-size:19px;line-height:22px;font-weight:bold;color:#151515;white-space:nowrap;letter-spacing:0.500px">Шкода Марина 32ПО</div>
<div class="abs" style="left:68.5px;top:335px;font-size:8px;line-height:9px;color:#fff;white-space:nowrap">фото</div>
<!--GIRL--><svg style="left:0;top:0" width="520" height="351" viewBox="13 138 520 351"><defs><clipPath id="docclip"><rect x="23.800" y="213.300" width="489.300" height="276"/></clipPath></defs><g clip-path="url(#docclip)">
<path d="M372 330Q366 345 358 361L423 361Q420 345 411 330Z" fill="#161616"/>
<path d="M432 371Q452 378 460 396Q469 418 473 445Q477 470 479.500 489L440 489L434 440Z" fill="#e9b07a"/>
<path d="M454.500 437.500Q458 434 462.500 432.500" stroke="#161616" stroke-width="1" fill="none" stroke-linecap="round"/>
<path d="M459 487.500Q470 484.500 479.500 485" stroke="#161616" stroke-width="1.200" fill="none"/>
<path d="M345 374Q338 380 334 392L329.500 348Q330.500 340 329 334L329.200 313Q329 309.800 326.200 309.800Q323.600 309.800 323.200 313L321.500 329Q312 328 309 334Q306.500 340 307.500 348Q298 380 298.500 405Q299 428 310 434Q322 438 334 431Q344 426 349 415Z" fill="#e9b07a"/>
<path d="M329.200 389.500V405" stroke="#161616" stroke-width="1" fill="none" stroke-linecap="round"/>
<path d="M313.500 329L311 339.500L314.200 336.500M317 328L313.800 340.500L317.200 337.500M320.500 328L316.800 341.500L320.300 338.500M323.500 330L320 343.500" stroke="#161616" stroke-width="1.150" stroke-linejoin="round" fill="none" stroke-linecap="round"/>
<path d="M380.500 340H404.500V364H380.500Z" fill="#e9b07a"/>
<path d="M374 358.500Q390 366 407.500 358.500Q424 362 436 372.500Q440 390 438.500 406Q436 436 429.700 462L430.500 467.500Q433 478 434.500 489L344 489Q346 478 348 467.500L348.500 462Q346 436 342 410Q340 390 341.500 372.500Q355 362 374 358.500Z" fill="#fc8c42"/>
<path d="M377 358Q390.500 367 404.500 358Q390.500 361 377 358Z" fill="#e9b07a"/>
<path d="M376 357Q390.500 368 405.500 357L404 352H378Z" fill="#e9b07a"/>
<path d="M374.500 358.500Q390.500 371 407 358.500M372.500 360Q390.500 375.500 409 360" stroke="#161616" stroke-width="1.150" fill="none"/>
<path d="M389.800 368.500V465" stroke="#161616" stroke-width="1.100" fill="none"/>
<ellipse cx="394.800" cy="389" rx="1.500" ry="2.100" fill="#161616"/>
<ellipse cx="394.800" cy="406.5" rx="1.500" ry="2.100" fill="#161616"/>
<ellipse cx="394.800" cy="425" rx="1.500" ry="2.100" fill="#161616"/>
<ellipse cx="394.800" cy="444" rx="1.500" ry="2.100" fill="#161616"/>
<path d="M348.500 461.500Q389 470 429.700 461.500M348 465.500Q389 474 430.300 465.500" stroke="#161616" stroke-width="1.200" fill="none"/>
<path d="M392 272Q364 273 361.500 303Q361 313 366 318L418 318Q423 311 422 300Q418 272 392 272Z" fill="#161616"/>
<path d="M369 312Q369 300 380 296Q388 293 392 293.500Q398 293 405 296Q414.500 300 414.500 312V324Q414.500 337 404 343.500Q392 350 381 343.500Q369 337 369 324Z" fill="#e9b07a"/>
<ellipse cx="367.800" cy="316.500" rx="2.800" ry="3.800" fill="#e9b07a"/><ellipse cx="416" cy="316.500" rx="2.800" ry="3.800" fill="#e9b07a"/>
<path d="M366 314Q365 290 392 284.500Q419 290 418 314Q416.500 309 414 308Q406 306 399 300.500Q394 297 392 293Q390 297 385 300.500Q378 306 370 308Q367.500 309 366 314Z" fill="#161616"/>
<path d="M364.500 311Q361 275 392 273.500Q421 275 419.500 308Q418 311 416.500 308.500Q416 285 392 284Q367 285 369.500 311Q367 313.500 364.500 311Z" fill="#f7c634"/>
<circle cx="365" cy="325.500" r="4" fill="#fff" stroke="#161616" stroke-width="1.100"/><circle cx="416.700" cy="326.500" r="4" fill="#fff" stroke="#161616" stroke-width="1"/>
<circle cx="381.800" cy="318" r="1.300" fill="#161616"/><circle cx="401.500" cy="318" r="1.300" fill="#161616"/>
<path d="M377.500 313.200Q381 311.800 384.500 312.800M398.500 312.800Q402 311.800 405.500 313.200" stroke="#161616" stroke-width="0.800" fill="none"/>
<path d="M392 311.500L389.800 327H395.300" stroke="#161616" stroke-width="0.900" fill="none" stroke-linejoin="round" stroke-linecap="round"/>
<path d="M383.400 331Q390.300 334 397.600 331Q396.500 342 390.400 342Q384.500 342 383.400 331Z" fill="#fff" stroke="#161616" stroke-width="1" stroke-linejoin="round"/>
<circle cx="376" cy="324.5" r="0.550" fill="#5a3a20"/>
<circle cx="378.2" cy="326" r="0.550" fill="#5a3a20"/>
<circle cx="375.5" cy="327" r="0.550" fill="#5a3a20"/>
<circle cx="405.5" cy="324.5" r="0.550" fill="#5a3a20"/>
<circle cx="407.5" cy="326" r="0.550" fill="#5a3a20"/>
<circle cx="405" cy="327.2" r="0.550" fill="#5a3a20"/>
</g></svg><!--/GIRL-->
<svg style="left:513.5px;top:339.5px" width="7" height="11" viewBox="0 0 7 11"><path d="M0.500 0.500V9L2.500 7.200L4 10.500L5.200 10L3.700 6.800H6.500Z" fill="#0a0a0a" stroke="#bbb" stroke-width="0.500"/></svg>
</div>
<div class="tile" id="t0" style="left:546px;top:55px">
<div class="abs" style="left:0;top:0;width:154px;height:114px;border:3px solid #669df6;border-radius:7px"></div>
<div class="av"><svg width="46" height="46" viewBox="0 0 46 46"><rect width="46" height="46" fill="#fff"/><g><circle cx="9" cy="17" r="1" fill="#f4a6b4"/><circle cx="34" cy="12" r="1" fill="#f2c94c"/><circle cx="31" cy="24" r="0.900" fill="#6cc5e0"/><circle cx="10" cy="29" r="0.900" fill="#f28b82"/><circle cx="36" cy="36" r="0.900" fill="#7fd6a0"/><path d="M12 34L20 31" stroke="#c9a36b" stroke-width="1.200"/><path d="M28 25Q36 30 44 34L41 35Q33 32 26 29Z" fill="#b8792f"/><path d="M13 8Q17 3 22 7Q25 10 24 15Q30 22 29 30Q24 35 18 32Q13 26 14 17Q10 13 13 8Z" fill="#4f9a3a"/><path d="M14 16Q18 19 24 15Q27 22 24 28Q18 30 15 24Z" fill="#8c2f3a"/><path d="M24 24Q28 28 31 27L29 31Q25 31 23 29Z" fill="#2d9fb0"/><path d="M11.500 9Q14 6 18 6.500L16 11L12 12Z" fill="#3a3f2a"/><circle cx="15" cy="10" r="1.500" fill="#e8e8e8"/><circle cx="15" cy="10" r="0.800" fill="#222"/></g></svg><div class="abs" style="left:0;top:7px;width:46px;height:33px;background:rgba(128,128,128,0.6)"></div></div>
<div class="abs" style="left:125px;top:9px;width:20px;height:20px;border-radius:50%;background:#1a73e8"><svg style="left:4px;top:8px" width="12" height="4" viewBox="0 0 12 4"><circle cx="2" cy="2" r="1.300" fill="#fff"/><circle cx="6" cy="2" r="1.300" fill="#fff"/><circle cx="10" cy="2" r="1.300" fill="#fff"/></svg></div>
<svg style="left:37px;top:49px" width="13" height="16" viewBox="0 0 13 16"><path d="M3.500 1H9.500M4.500 1V7L2 10H11L8.500 7V1M6.500 10V15.500" stroke="#c9c9c9" stroke-width="1.500" fill="none" stroke-linejoin="round"/></svg>
<svg style="left:72px;top:50px" width="10" height="14" viewBox="0 0 10 14"><rect x="3" y="0.500" width="4" height="8" rx="2" fill="#e9c6cf"/><path d="M1 6.500A4 4 0 0 0 9 6.500M5 10.500V13.500" stroke="#e9c6cf" stroke-width="1.300" fill="none"/></svg>
<svg style="left:103px;top:49px" width="16" height="16" viewBox="0 0 16 16"><circle cx="8" cy="8" r="6.800" fill="none" stroke="#c9c9c9" stroke-width="1.500"/><path d="M4.300 8H11.700" stroke="#c9c9c9" stroke-width="1.500"/></svg>
<div class="nm">Марина Віталіївна Шко...</div>
</div>
<div class="tile" id="t1" style="left:709px;top:55px">
<div class="av"><svg width="46" height="46" viewBox="0 0 46 46"><rect width="46" height="46" fill="#fff"/><path d="M17 13L18.200 15.300L20.500 16.500L18.200 17.700L17 20L15.800 17.700L13.500 16.500L15.800 15.300Z" fill="none" stroke="#f06a6a" stroke-width="0.800"/><path d="M38 27L39 29L41 30L39 31L38 33L37 31L35 30L37 29Z" fill="none" stroke="#f59aa8" stroke-width="0.800"/><circle cx="14" cy="19.500" r="1" fill="#3ecf6a"/><circle cx="22" cy="14" r="0.900" fill="#f2c94c"/><circle cx="19" cy="12" r="0.800" fill="#7fd0ee"/><circle cx="36" cy="35" r="1" fill="#3ec0e0"/><circle cx="39" cy="32.500" r="0.900" fill="#3ecf6a"/><circle cx="43" cy="28" r="0.900" fill="#f28b82"/><circle cx="40" cy="22" r="0.700" fill="#7fd0ee"/><path d="M4 34Q12 31 20 26L23 30Q13 33 4 35Z" fill="#0d6b4f"/><path d="M14 31Q18 29 22 28L23 30Q18 31 14 32Z" fill="#b03020"/><path d="M20 24Q22 17 28 14L38 17Q39 26 33 32Q26 33 20 29Z" fill="#c0281f"/><path d="M21 22L30 17L36 20L28 26Z" fill="#f2e9c9"/><path d="M21 22L30 17L31 18.500L22 23.500Z" fill="#3a9a4a"/><path d="M20 26L27 22L33 27L30 30L22 29Z" fill="#f0a070"/><path d="M29 26L36 24L35 27L30 29Z" fill="#4aa04a"/><path d="M21 30Q24 33 26 30L25 33Q22 34 21 32Z" fill="#1a55b0"/><path d="M26 31L33 31L31 34L27 34Z" fill="#1aa0a0"/><path d="M27 10Q31 6 36 8Q40 11 38 15Q34 18 29 15Q26 13 27 10Z" fill="#3a3230"/><path d="M27 12Q30 11 32 14Q33 17 29 16Q27 15 27 12Z" fill="#2a9a80"/><circle cx="34" cy="11.500" r="1.700" fill="#eee"/><circle cx="34" cy="11.500" r="0.900" fill="#222"/><path d="M19 35L28 37M22 37L29 35M27 35L33 38" stroke="#777" stroke-width="0.700" fill="none"/></svg></div>
<div class="mic"><svg style="left:2.750px;top:2.750px" width="14.500" height="14.500" viewBox="0 0 24 24"><path d="M12 3.200A2.800 2.800 0 0 0 9.200 6V6.700L14.800 12.300V6A2.800 2.800 0 0 0 12 3.200ZM17.700 11H19.500A7.500 7.500 0 0 1 18.500 14.700L17.200 13.400A5.700 5.700 0 0 0 17.700 11ZM3.700 3.300L2.500 4.500L9.200 11.200A2.800 2.800 0 0 0 12.700 13.700L14.200 15.200A5.700 5.700 0 0 1 6.300 11H4.500A7.500 7.500 0 0 0 11.100 18.400V21.500H12.900V18.400A7.500 7.500 0 0 0 15.500 17.500L19.500 21.500L20.700 20.300Z" fill="#fff"/></svg></div>
<div class="nm">Христина Ігорівна Лав...</div>
</div>
<div class="tile" id="t2" style="left:872px;top:55px">
<div class="av"><svg width="46" height="46" viewBox="0 0 46 46"><defs><linearGradient id="sky1" x1="0" y1="0" x2="0" y2="1"><stop offset="0" stop-color="#1b78cc"/><stop offset="1" stop-color="#3f9de2"/></linearGradient><filter id="b1"><feGaussianBlur stdDeviation="0.500"/></filter></defs><rect width="46" height="46" fill="url(#sky1)"/><g filter="url(#b1)"><path d="M25.500 26L27 24L33 22.500L38 21.500L46 20.500V32H25.500Z" fill="#c4563f"/><path d="M18.200 26V20.500L19.200 18L19.800 14L20.700 9.500L21.600 14L22.200 18L23.400 20.500V26Z" fill="#3a8f7c"/><rect x="18.400" y="23" width="5.200" height="4" fill="#8a5a48"/><path d="M9.800 30V25.500L10.600 23L11.200 20.500L11.800 23L12.600 25.500V30Z" fill="#4aa590"/><path d="M-1 31Q4 28 9 29Q13 26 18 27Q23 25 27 26.500Q33 24 38 25.500Q43 23.500 47 24.500V47H-1Z" fill="#215f1e"/><path d="M2 36Q8 32 15 34Q22 30 30 33Q38 30 46 33V47H0Z" fill="#194f1a"/><path d="M6 41Q14 37 24 40Q34 37 44 41V47H4Z" fill="#236a24"/><path d="M10 33Q14 31 17 33M26 30Q30 28 34 30M34 36Q38 34 42 36" stroke="#3a8a34" stroke-width="1.200" fill="none"/></g></svg></div>
<div class="mic"><svg style="left:2.750px;top:2.750px" width="14.500" height="14.500" viewBox="0 0 24 24"><path d="M12 3.200A2.800 2.800 0 0 0 9.200 6V6.700L14.800 12.300V6A2.800 2.800 0 0 0 12 3.200ZM17.700 11H19.500A7.500 7.500 0 0 1 18.500 14.700L17.200 13.400A5.700 5.700 0 0 0 17.700 11ZM3.700 3.300L2.500 4.500L9.200 11.200A2.800 2.800 0 0 0 12.700 13.700L14.200 15.200A5.700 5.700 0 0 1 6.300 11H4.500A7.500 7.500 0 0 0 11.100 18.400V21.500H12.900V18.400A7.500 7.500 0 0 0 15.500 17.500L19.500 21.500L20.700 20.300Z" fill="#fff"/></svg></div>
<div class="nm">Олександр Олександ...</div>
</div>
<div class="tile" id="t3" style="left:546px;top:178px">
<div class="av"><svg width="46" height="46" viewBox="0 0 46 46"><defs><filter id="b2"><feGaussianBlur stdDeviation="0.700"/></filter></defs><rect width="46" height="46" fill="#e4dcdc"/><g filter="url(#b2)"><path d="M0 30L14 14M30 10L46 16M24 0L28 8" stroke="#c9b7a8" stroke-width="0.800" fill="none"/><ellipse cx="38" cy="24" rx="8" ry="14" fill="#f1ecec"/><path d="M11 32Q16 28 22 30Q28 28 32 33L30 42Q22 46 13 42Z" fill="#b9a5b0"/><path d="M13 6Q11 3 9 4Q8 10 11 16Q10 22 15 25Q13 32 16 38L20 39L22 34L24 39L28 38Q31 31 28 24Q33 21 32 15Q35 8 34 2Q31 2 28 6Q21 3 13 6Z" fill="#a8937e"/><path d="M16 26Q22 30 27 26Q28 32 25 36L22 33L19 36Q16 32 16 26Z" fill="#d9cdc4"/><path d="M15 12Q21 9 28 12Q31 18 27 23Q21 26 16 23Q12 18 15 12Z" fill="#b9a48e"/><path d="M20 6L21 13M23 6L22.500 13" stroke="#5a4a3c" stroke-width="1"/><path d="M15 30L19 32M15 33L18 34.500M29 29L26 31M29 32L26.500 33.500" stroke="#4a3c30" stroke-width="1.200"/><ellipse cx="17.500" cy="17.500" rx="1.900" ry="1.700" fill="#15130f"/><ellipse cx="26" cy="17" rx="1.900" ry="1.700" fill="#15130f"/><path d="M21 20.500L23 20.500L22 22Z" fill="#5a3a30"/></g></svg></div>
<div class="mic"><svg style="left:2.750px;top:2.750px" width="14.500" height="14.500" viewBox="0 0 24 24"><path d="M12 3.200A2.800 2.800 0 0 0 9.200 6V6.700L14.800 12.300V6A2.800 2.800 0 0 0 12 3.200ZM17.700 11H19.500A7.500 7.500 0 0 1 18.500 14.700L17.200 13.400A5.700 5.700 0 0 0 17.700 11ZM3.700 3.300L2.500 4.500L9.200 11.200A2.800 2.800 0 0 0 12.700 13.700L14.200 15.200A5.700 5.700 0 0 1 6.300 11H4.500A7.500 7.500 0 0 0 11.100 18.400V21.500H12.900V18.400A7.500 7.500 0 0 0 15.500 17.500L19.500 21.500L20.700 20.300Z" fill="#fff"/></svg></div>
<div class="nm">Валерія Олександрівн...</div>
</div>
<div class="tile" id="t4" style="left:709px;top:178px">
<div class="av"><svg width="46" height="46" viewBox="0 0 46 46"><defs><filter id="b3"><feGaussianBlur stdDeviation="0.700"/></filter><linearGradient id="w3" x1="0" y1="0" x2="1" y2="0"><stop offset="0" stop-color="#a4a6aa"/><stop offset="1" stop-color="#cfd0d4"/></linearGradient></defs><rect width="46" height="46" fill="url(#w3)"/><g filter="url(#b3)"><path d="M0 24L8 22L24 38V46H0Z" fill="#5a3a34"/><path d="M0 22L9 20L25 36" stroke="#b9b9b9" stroke-width="1.200" fill="none"/><path d="M7 6L20 18M10 8V40M20 18V44M0 24L10 18M3 34L20 24" stroke="#d8d8d8" stroke-width="1.300" fill="none"/><path d="M22 8Q26 3 31 6Q36 10 36 18Q40 24 41 34L30 40L22 36Q25 28 23 20Q21 13 22 8Z" fill="#7a5238"/><path d="M24 22Q30 18 37 20Q44 24 44 34L40 40L22 40Q20 30 24 22Z" fill="#d8dbe8"/><path d="M28 20L34 20L33 34L29 34Z" fill="#f4f4f6"/><ellipse cx="29.500" cy="12.500" rx="3.600" ry="4.600" fill="#c99a80" transform="rotate(-12 29.500 12.500)"/><path d="M19 36Q26 32 34 35L33 40L22 41Z" fill="#d0a68c"/><path d="M18 40Q24 37 30 40L36 38L38 46H18Z" fill="#eef0f4"/><path d="M22 40Q26 38 31 41L30 46H23Z" fill="#cfa58c"/></g></svg></div>
<div class="mic"><svg style="left:2.750px;top:2.750px" width="14.500" height="14.500" viewBox="0 0 24 24"><path d="M12 3.200A2.800 2.800 0 0 0 9.200 6V6.700L14.800 12.300V6A2.800 2.800 0 0 0 12 3.200ZM17.700 11H19.500A7.500 7.500 0 0 1 18.500 14.700L17.200 13.400A5.700 5.700 0 0 0 17.700 11ZM3.700 3.300L2.500 4.500L9.200 11.200A2.800 2.800 0 0 0 12.700 13.700L14.200 15.200A5.700 5.700 0 0 1 6.300 11H4.500A7.500 7.500 0 0 0 11.100 18.400V21.500H12.900V18.400A7.500 7.500 0 0 0 15.500 17.500L19.500 21.500L20.700 20.300Z" fill="#fff"/></svg></div>
<div class="nm">Катерина Антонівна Цу...</div>
</div>
<div class="tile" id="t5" style="left:872px;top:178px">
<div class="av"><svg width="46" height="46" viewBox="0 0 46 46"><defs><filter id="b4"><feGaussianBlur stdDeviation="0.900"/></filter></defs><rect width="46" height="46" fill="#8fc04a"/><g filter="url(#b4)"><rect x="0" y="12" width="46" height="12" fill="#8fb4ea"/><path d="M0 0H46V17L34 15L14 12L0 14Z" fill="#5a3f26"/><path d="M36 10Q42 14 46 30V8Z" fill="#4a3a22"/><path d="M0 22Q8 18 14 24Q10 30 12 36L0 34Z" fill="#5a9a30"/><path d="M12 34Q22 30 36 34Q44 36 46 32V46H0V36Z" fill="#9acb3c"/><path d="M30 22Q38 18 42 26Q40 34 32 32Z" fill="#8a3a48"/><path d="M13 20Q16 12 24 13Q32 14 32 22Q33 30 27 33Q26 38 24 40L22 34Q14 34 12 28Q11 24 13 20Z" fill="#f3e6dc"/><path d="M11 26Q9 30 12 34L16 32L14 27Z" fill="#f2a890"/><path d="M22 34L26 33L25 40L23 41Z" fill="#f5b0a0"/><circle cx="14" cy="18" r="1.500" fill="#e040a0"/><circle cx="29" cy="24" r="1.500" fill="#e06080"/><ellipse cx="22" cy="26" rx="2" ry="1.500" fill="#2a221a"/><ellipse cx="28" cy="28" rx="1.400" ry="1.100" fill="#2a221a"/><circle cx="20" cy="38" r="1" fill="#d050c0"/></g></svg></div>
<div class="mic"><svg style="left:2.750px;top:2.750px" width="14.500" height="14.500" viewBox="0 0 24 24"><path d="M12 3.200A2.800 2.800 0 0 0 9.200 6V6.700L14.800 12.300V6A2.800 2.800 0 0 0 12 3.200ZM17.700 11H19.500A7.500 7.500 0 0 1 18.500 14.700L17.200 13.400A5.700 5.700 0 0 0 17.700 11ZM3.700 3.300L2.500 4.500L9.200 11.200A2.800 2.800 0 0 0 12.700 13.700L14.200 15.200A5.700 5.700 0 0 1 6.300 11H4.500A7.500 7.500 0 0 0 11.100 18.400V21.500H12.900V18.400A7.500 7.500 0 0 0 15.500 17.500L19.500 21.500L20.700 20.300Z" fill="#fff"/></svg></div>
<div class="nm">Юлія Вікторівна Куляв...</div>
</div>
<div class="tile" id="t6" style="left:546px;top:301px">
<div class="av"><svg width="46" height="46" viewBox="0 0 46 46"><defs><filter id="b5"><feGaussianBlur stdDeviation="0.800"/></filter><linearGradient id="s5" x1="0" y1="0" x2="0" y2="1"><stop offset="0" stop-color="#a9a0c0"/><stop offset="0.200" stop-color="#e8a088"/><stop offset="0.350" stop-color="#f08a58"/><stop offset="0.420" stop-color="#8a6a6a"/><stop offset="0.550" stop-color="#3a3c4c"/><stop offset="1" stop-color="#23242e"/></linearGradient></defs><rect width="46" height="46" fill="url(#s5)"/><g filter="url(#b5)"><path d="M0 8L8 8Q16 10 22 14L26 17L26 22H0Z" fill="#1a1a20"/><path d="M34 16.500L46 15.500V20L36 18Z" fill="#c08a8a"/><path d="M0 22H46V26L0 25Z" fill="#4a4c5a"/><path d="M0 25L46 26V46H0Z" fill="#2c2e3a"/><path d="M0 23L46 24" stroke="#5a5c6a" stroke-width="1"/><path d="M21 13Q24 11 25 14L26 20L25 28L23 40H20L19 30L17 28Q18 20 21 13Z" fill="#16161c"/><path d="M19 30L24 30L23 42L19 42Z" fill="#3a4458"/><ellipse cx="25" cy="36" rx="1" ry="2" fill="#d8d8de"/><ellipse cx="21.500" cy="43.500" rx="2.200" ry="1" fill="#e8e8ec"/><path d="M26 8V16" stroke="#8a6a6a" stroke-width="0.400"/></g></svg></div>
<div class="mic"><svg style="left:2.750px;top:2.750px" width="14.500" height="14.500" viewBox="0 0 24 24"><path d="M12 3.200A2.800 2.800 0 0 0 9.200 6V6.700L14.800 12.300V6A2.800 2.800 0 0 0 12 3.200ZM17.700 11H19.500A7.500 7.500 0 0 1 18.500 14.700L17.200 13.400A5.700 5.700 0 0 0 17.700 11ZM3.700 3.300L2.500 4.500L9.200 11.200A2.800 2.800 0 0 0 12.700 13.700L14.200 15.200A5.700 5.700 0 0 1 6.300 11H4.500A7.500 7.500 0 0 0 11.100 18.400V21.500H12.900V18.400A7.500 7.500 0 0 0 15.500 17.500L19.500 21.500L20.700 20.300Z" fill="#fff"/></svg></div>
<div class="nm">Катерина Олексіївна П...</div>
</div>
<div class="tile" id="t7" style="left:709px;top:301px">
<div class="av"><svg width="46" height="46" viewBox="0 0 46 46"><defs><filter id="b6"><feGaussianBlur stdDeviation="0.350"/></filter></defs><rect width="46" height="46" fill="#e4f4f2"/><g filter="url(#b6)"><path d="M17 9L18 11L20 12L18 13L17 15L16 13L14 12L16 11Z" fill="#c4ece8"/><path d="M36 33L37 35L39 36L37 37L36 39L35 37L33 36L35 35Z" fill="#c4ece8"/><circle cx="15" cy="16" r="0.900" fill="#f4e070"/><circle cx="10" cy="19" r="0.900" fill="#f4a0a8"/><circle cx="8" cy="24" r="0.800" fill="#e8e890"/><circle cx="39" cy="23.500" r="1" fill="#f4e070"/><circle cx="38.500" cy="28" r="0.800" fill="#f28b82"/><circle cx="37" cy="20.500" r="0.700" fill="#f4b0c0"/><circle cx="40" cy="32" r="0.800" fill="#e8f0a0"/><circle cx="7" cy="31" r="0.800" fill="#e0c8f0"/><path d="M4 38L13 31L15 33L6 40Z" fill="#6a8a1a"/><path d="M13 26L16 25L18 31L15 33Q12 30 13 26Z" fill="#2a78d0"/><path d="M32 30L36 29Q37 32 33 34L31 33Z" fill="#2a78d0"/><path d="M14 26Q16 24 18 26L17 29Z" fill="#3a9a3a"/><path d="M31 29L36 28L36 30Z" fill="#3a9a3a"/><path d="M17 30Q24 34 31 31L30 36Q24 38 18 35Z" fill="#f6b01a"/><path d="M18 31Q20 36 19 40L22 36L21 32Z" fill="#e8401a"/><path d="M28 32Q28 36 30 38L26 36Z" fill="#e8401a"/><path d="M15 20Q16 14 22 13L31 14Q36 18 35 26Q33 32 24 33Q16 32 15 26Z" fill="#f6ecd6"/><path d="M21 12Q30 11 33 16L24 15Z" fill="#f0e0c0"/><path d="M20 9Q21 3 27 3Q33 4 33 10Q32 14 27 14Q21 14 20 9Z" fill="#e8241c"/><path d="M26 12Q30 11 32 13Q29 15 26 14Z" fill="#f08a1a"/><ellipse cx="29.500" cy="8.500" rx="1.900" ry="2.600" fill="#3a2a2a"/><circle cx="23.500" cy="8" r="1.100" fill="#cde"/><circle cx="23.500" cy="8" r="0.600" fill="#234"/><path d="M19 38L18 41M19 38L21 41M19 38L16.500 40M29 37L28 40M29 37L31 40M29 37L32.500 39" stroke="#e8a090" stroke-width="0.900" fill="none"/></g></svg></div>
<div class="mic"><svg style="left:2.750px;top:2.750px" width="14.500" height="14.500" viewBox="0 0 24 24"><path d="M12 3.200A2.800 2.800 0 0 0 9.200 6V6.700L14.800 12.300V6A2.800 2.800 0 0 0 12 3.200ZM17.700 11H19.500A7.500 7.500 0 0 1 18.500 14.700L17.200 13.400A5.700 5.700 0 0 0 17.700 11ZM3.700 3.300L2.500 4.500L9.200 11.200A2.800 2.800 0 0 0 12.700 13.700L14.200 15.200A5.700 5.700 0 0 1 6.300 11H4.500A7.500 7.500 0 0 0 11.100 18.400V21.500H12.900V18.400A7.500 7.500 0 0 0 15.500 17.500L19.500 21.500L20.700 20.300Z" fill="#fff"/></svg></div>
<div class="nm">Юлія Євгенівна Альохі...</div>
</div>
<div class="tile" id="t8" style="left:872px;top:301px">
<div class="av"><svg width="46" height="46" viewBox="0 0 46 46"><defs><filter id="b7"><feGaussianBlur stdDeviation="0.500"/></filter><linearGradient id="g7" x1="0" y1="0" x2="1" y2="0"><stop offset="0" stop-color="#a9dcea"/><stop offset="0.500" stop-color="#d4e8ee"/><stop offset="1" stop-color="#dfe3e8"/></linearGradient></defs><rect width="46" height="46" fill="url(#g7)"/><g filter="url(#b7)"><path d="M19 5Q24 1 30 5Q34 9 33 18Q35 24 33 30L28 46H12Q11 38 14 30Q16 22 16 14Q16 8 19 5Z" fill="#2c201d"/><path d="M5 36Q8 29 16 28L24 32L33 27Q40 28 42 35L42 46H4Z" fill="#1c1c20"/><path d="M22 11Q25 8 29 10Q31 14 30 20Q28 25 25 25Q22 23 21.500 18Z" fill="#d9b3a4"/><path d="M24 21.500Q26.500 20.800 28.500 21.500Q26.500 23 24 21.500Z" fill="#d83a6a"/><path d="M23 15.500L25 15.500M27.500 15.500L29.500 15.500" stroke="#4a3a36" stroke-width="0.800"/><path d="M16 14Q14 26 13 32Q12 40 14 46L22 46Q20 36 22 28Q20 20 21 12Z" fill="#4a342c"/><path d="M30 22Q34 26 32 34L28 30Z" fill="#241c1c"/></g></svg></div>
<div class="mic"><svg style="left:2.750px;top:2.750px" width="14.500" height="14.500" viewBox="0 0 24 24"><path d="M12 3.200A2.800 2.800 0 0 0 9.200 6V6.700L14.800 12.300V6A2.800 2.800 0 0 0 12 3.200ZM17.700 11H19.500A7.500 7.500 0 0 1 18.500 14.700L17.200 13.400A5.700 5.700 0 0 0 17.700 11ZM3.700 3.300L2.500 4.500L9.200 11.200A2.800 2.800 0 0 0 12.700 13.700L14.200 15.200A5.700 5.700 0 0 1 6.300 11H4.500A7.500 7.500 0 0 0 11.100 18.400V21.500H12.900V18.400A7.500 7.500 0 0 0 15.500 17.500L19.500 21.500L20.700 20.300Z" fill="#fff"/></svg></div>
<div class="nm">Ви</div>
</div>
<div class="abs" id="clk" style="left:18.500px;top:438px;letter-spacing:-0.250px;font-size:11.500px;line-height:14px;font-weight:bold;color:#fff;white-space:nowrap">15:01</div>
<div class="abs" style="left:55px;top:439px;width:1px;height:13px;background:#8a8d91"></div>
<div class="abs" id="mtitle" style="left:66px;top:438px;font-size:11.500px;line-height:14px;font-weight:bold;color:#fff;white-space:nowrap;letter-spacing:0.250px">Пробна практика 32 ПО</div>
<div class="abs" style="left:377.15px;top:430px;width:30.5px;height:30px;border-radius:15px;background:#ea4335"><svg style="left:8.500px;top:8px" width="14" height="14" viewBox="0 0 24 24"><path d="M12 3.200A2.800 2.800 0 0 0 9.200 6V6.700L14.800 12.300V6A2.800 2.800 0 0 0 12 3.200ZM17.700 11H19.500A7.500 7.500 0 0 1 18.500 14.700L17.200 13.400A5.700 5.700 0 0 0 17.700 11ZM3.700 3.300L2.500 4.500L9.200 11.200A2.800 2.800 0 0 0 12.700 13.700L14.200 15.200A5.700 5.700 0 0 1 6.300 11H4.500A7.500 7.500 0 0 0 11.100 18.400V21.500H12.900V18.400A7.500 7.500 0 0 0 15.500 17.500L19.500 21.500L20.700 20.300Z" fill="#fff"/></svg></div>
<div class="abs" style="left:416.55px;top:430px;width:30.5px;height:30px;border-radius:15px;background:#ea4335"><svg style="left:8px;top:8px" width="15" height="14" viewBox="0 0 24 22"><path d="M3.500 5.500H15.500V16.500H3.500ZM15.500 9L20.500 6V16L15.500 13" stroke="#fff" stroke-width="1.800" fill="none" stroke-linejoin="round"/><path d="M3 2L19 20" stroke="#fff" stroke-width="1.800"/><path d="M4.300 1L20.300 19" stroke="#ea4335" stroke-width="1.400"/></svg></div>
<div class="abs" style="left:456.05px;top:430px;width:30.5px;height:30px;border-radius:15px;background:#3c4043"><svg style="left:6.800px;top:5px" width="16.500" height="20" viewBox="-0.500 0 14 17"><path d="M3.500 9V3.200A0.900 0.900 0 0 1 5.300 3.200V8M5.300 7.500V1.900A0.900 0.900 0 0 1 7.100 1.900V7.500M7.100 7.500V2.500A0.900 0.900 0 0 1 8.900 2.500V8M8.900 8V4.200A0.900 0.900 0 0 1 10.700 4.200V11.500Q10.700 15.800 6.800 15.800Q4.300 15.800 3 13.200L0.900 9.300Q1.900 8.200 3.500 10" stroke="#fff" stroke-width="1.450" fill="none" stroke-linejoin="round" stroke-linecap="round"/></svg></div>
<div class="abs" style="left:495.75px;top:430px;width:30.5px;height:30px;border-radius:15px;background:#3c4043"><svg style="left:6.500px;top:6.200px" width="17.500" height="17.500" viewBox="0 0 16 16"><circle cx="8" cy="8" r="6.700" stroke="#fff" stroke-width="1.600" fill="none"/><circle cx="5.600" cy="6.300" r="1.100" fill="#fff"/><circle cx="10.400" cy="6.300" r="1.100" fill="#fff"/><path d="M4.200 9H11.800Q11 12.300 8 12.300Q5 12.300 4.200 9Z" fill="#fff"/></svg></div>
<div class="abs" style="left:535.25px;top:430px;width:30.5px;height:30px;border-radius:15px;background:#3c4043"><svg style="left:7px;top:8px" width="17" height="14" viewBox="0 0 17 14"><rect x="0.900" y="0.900" width="15.200" height="12.200" rx="1" stroke="#fff" stroke-width="1.700" fill="none"/><path d="M8.500 4L11.500 7.200H9.500V10H7.500V7.200H5.500Z" fill="#fff"/></svg></div>
<div class="abs" style="left:574.55px;top:430px;width:30.5px;height:30px;border-radius:15px;background:#3c4043"><svg style="left:13.500px;top:7.500px" width="4" height="15" viewBox="0 0 4 15"><circle cx="2" cy="2" r="1.500" fill="#fff"/><circle cx="2" cy="7.500" r="1.500" fill="#fff"/><circle cx="2" cy="13" r="1.500" fill="#fff"/></svg></div>
<div class="abs" style="left:614.25px;top:430px;width:42.5px;height:30px;border-radius:15px;background:#ea4335"><svg style="left:12.500px;top:10.500px" width="18" height="9" viewBox="0 0 18 9"><path d="M9 1.200Q4 1.200 0.700 4.200Q0.300 4.700 0.700 5.200L2.600 7.200Q3 7.500 3.500 7.200L5.600 5.700Q5.900 5.400 5.900 5V3.600Q9 2.800 12.100 3.600V5Q12.100 5.400 12.400 5.700L14.500 7.200Q15 7.500 15.400 7.200L17.300 5.200Q17.700 4.700 17.300 4.200Q14 1.200 9 1.200Z" fill="#fff"/></svg></div>
<svg style="left:852px;top:437px" width="16" height="16" viewBox="0 0 16 16"><circle cx="8" cy="8" r="6.800" stroke="#fff" stroke-width="1.700" fill="none"/><rect x="7.100" y="7" width="1.800" height="4.500" fill="#fff"/><circle cx="8" cy="4.800" r="1.100" fill="#fff"/></svg>
<svg style="left:887.700px;top:438.9px" width="18.200" height="12.400" viewBox="0 0 18.200 12.400"><circle cx="6.900" cy="3.300" r="2.550" stroke="#fff" stroke-width="1.600" fill="none"/><path d="M0.800 11.600V10.200Q0.800 7.700 6.900 7.700Q13 7.700 13 10.200V11.600Z" stroke="#fff" stroke-width="1.600" fill="none" stroke-linejoin="round"/><path d="M9.720 0.600A3.350 3.350 0 1 1 9.720 6A3.900 3.900 0 0 0 9.720 0.600Z" fill="#fff"/><path d="M13.300 7.100Q18.200 7.700 18.200 10.500V12.400H14.700V10.200Q14.700 8.300 13.300 7.100Z" fill="#fff"/></svg>
<svg style="left:925px;top:437.5px" width="16" height="16" viewBox="0 0 16 16"><path d="M0.900 0.900H15.100V11.600H3.900L0.900 14.600Z" stroke="#fff" stroke-width="1.700" fill="none" stroke-linejoin="round"/><path d="M3.800 4H12.200M3.800 6.300H12.200M3.800 8.600H9.500" stroke="#fff" stroke-width="1.300"/></svg>
<svg style="left:962px;top:437.5px" width="16" height="16" viewBox="0 0 16 16"><path d="M8 1.200L11 6.200H5Z" stroke="#fff" stroke-width="1.600" fill="none" stroke-linejoin="round"/><rect x="1.300" y="9.500" width="5" height="5" stroke="#fff" stroke-width="1.600" fill="none"/><circle cx="12" cy="12" r="2.700" stroke="#fff" stroke-width="1.600" fill="none"/></svg>
<svg style="left:999.500px;top:436.5px" width="16" height="17" viewBox="0 0 16 17"><path d="M3.500 6.500V4A3 3 0 0 1 9.500 4V6.500" stroke="#fff" stroke-width="1.600" fill="none"/><path d="M8 15.200H1.200V6.800H11.800V9" stroke="#fff" stroke-width="1.600" fill="none" stroke-linejoin="round"/><circle cx="11.800" cy="13" r="3.400" fill="#fff"/><circle cx="11.800" cy="12" r="1" fill="#202124"/><path d="M9.900 14.800Q11.800 13.200 13.700 14.800" stroke="#202124" stroke-width="0.900" fill="none"/></svg>
<div class="abs" style="left:897.300px;top:420.3px;width:20.700px;height:14.800px;border-radius:7.400px;background:#5f6368;color:#fff;font-size:9px;line-height:14.500px;font-weight:bold;text-align:center;letter-spacing:0.200px">10</div>
</div>
<div id="taskbar">
<div class="abs" style="left:224px;top:0;width:35px;height:31px;background:rgba(255,255,255,0.2);border-bottom:1px solid rgba(255,255,255,0.55)"></div>
<div class="abs" style="left:261px;top:0;width:35px;height:31px;background:rgba(255,255,255,0.38);border-bottom:1px solid rgba(255,255,255,0.7)"></div>
<div class="abs" style="left:298px;top:0;width:36px;height:31px;background:rgba(255,255,255,0.2);border-bottom:1px solid rgba(255,255,255,0.55)"></div>
<svg style="left:10.500px;top:8px" width="15.500" height="15" viewBox="0 0 31 30"><path d="M0 4.300L12.500 2.600V14.200H0ZM14 2.400L31 0V14.200H14ZM0 15.700H12.500V27.400L0 25.700ZM14 15.700H31V30L14 27.600Z" fill="#fff"/></svg>
<svg style="left:49px;top:9px" width="13" height="13" viewBox="0 0 13 13"><circle cx="8" cy="5" r="4" stroke="#fff" stroke-width="1.200" fill="none"/><path d="M5.200 7.800L0.600 12.400" stroke="#fff" stroke-width="1.300"/></svg>
<svg style="left:84.500px;top:9.500px" width="13" height="12" viewBox="0 0 13 12"><path d="M1 0.500H9M1 11.500H9" stroke="#fff" stroke-width="1"/><rect x="1.500" y="3" width="7" height="6" stroke="#fff" stroke-width="1" fill="none"/><path d="M11.500 0V2M11.500 10V12" stroke="#fff" stroke-width="1.200"/><rect x="10.800" y="3.500" width="1.500" height="5" fill="#fff"/></svg>
<svg style="left:120.500px;top:7px" width="19" height="17" viewBox="0 0 19 17"><path d="M0 6L9.500 0L19 6V16.500H0Z" fill="#1490df"/><path d="M2 5.500H17V12H2Z" fill="#fff"/><path d="M0 6L9.500 12L19 6V16.500H0Z" fill="#28a8ea"/><path d="M0 16.500L9.500 10.500L19 16.500Z" fill="#50d9ff" opacity="0.55"/><path d="M2 5.500L9.500 0.800L17 5.500Z" fill="#0f6cbd"/></svg>
<svg style="left:157.500px;top:8px" width="19" height="16" viewBox="0 0 19 16"><defs><linearGradient id="eg1" x1="0" y1="0" x2="1" y2="1"><stop offset="0" stop-color="#35c1f1"/><stop offset="0.500" stop-color="#2bb673"/><stop offset="1" stop-color="#7ed957"/></linearGradient></defs><path d="M1 8A8.200 8 0 0 1 17.500 6.500Q18 10 13.500 10H8.500Q8.500 13 12 14.500Q5 17.500 1.500 11.500Z" fill="url(#eg1)"/><path d="M1 8Q1 15 8.500 15.800Q12 15.800 14.500 13.500Q10 15 7.500 11.500Q6 8.500 8.500 6.500Q4 5.500 1 8Z" fill="#0c59a4"/><path d="M1 8Q2 3 8 3.500Q12 4 12.500 7.500Q12.500 9 11.500 10H13.500Q18 10 17.500 6.500Q15.500 0 9 0Q2 0.500 1 8Z" fill="#1b9de2" opacity="0.600"/></svg>
<svg style="left:196px;top:9.500px" width="17" height="14.500" viewBox="0 0 17 14.500"><path d="M0 1H6L7.500 2.500H17V5H0Z" fill="#e8a317"/><rect x="0" y="3.500" width="17" height="11" fill="#ffd75a"/><rect x="0" y="3.500" width="17" height="2.500" fill="#f4bf2e"/><rect x="5" y="9" width="7" height="5.500" fill="#2a78d4"/><rect x="6.800" y="11.200" width="3.400" height="3.300" fill="#ffd75a"/></svg>
<svg style="left:232.500px;top:6.500px" width="18.500" height="18.500" viewBox="0 0 18.500 18.500"><rect width="18.500" height="18.500" rx="3.500" fill="#0b0b0b"/><path d="M3.500 6Q5 4.500 6.500 6.500L8.500 11.500Q9.500 13.500 10.500 11.500L11.500 8.500" stroke="#1fa3f1" stroke-width="2.300" fill="none" stroke-linecap="round"/><path d="M7.500 8.500L8.500 6.500Q9.500 4.800 10.800 6.500L12.500 11.500Q13.800 13.500 15 11.500Q16.500 8.500 14.500 6" stroke="#28d17c" stroke-width="2.300" fill="none" stroke-linecap="round"/><path d="M3.500 6Q2.500 8.500 4.500 12Q5.500 13.500 6.700 12" stroke="#1570d8" stroke-width="2.300" fill="none" stroke-linecap="round"/></svg>
<svg style="left:269px;top:6px" width="22" height="21" viewBox="0 0 22 21"><defs><clipPath id="cav"><circle cx="16.500" cy="15.500" r="5"/></clipPath></defs><circle cx="9.500" cy="9.500" r="9" fill="#fff"/><path d="M9.500 0.500A9 9 0 0 1 17.300 5H9.500A4.500 4.500 0 0 0 5.600 7.250L1.700 5A9 9 0 0 1 9.500 0.500Z" fill="#ea4335"/><path d="M17.300 5A9 9 0 0 1 9.500 18.500L13.400 11.750A4.500 4.500 0 0 0 13.400 7.250L13.400 5Z" fill="#fbbc04"/><path d="M1.700 5L5.600 11.750A4.500 4.500 0 0 0 9.500 14L13.400 11.750L9.500 18.500A9 9 0 0 1 1.700 5Z" fill="#34a853"/><circle cx="9.500" cy="9.500" r="4.200" fill="#fff"/><circle cx="9.500" cy="9.500" r="3.300" fill="#4285f4"/><g clip-path="url(#cav)"><rect x="11" y="10" width="11" height="11" fill="#dfe8ee"/><path d="M13.500 21Q12.500 13 16.500 11.500Q20.500 13 19.500 21Z" fill="#2a1c1a"/><ellipse cx="16.800" cy="14.500" rx="1.500" ry="1.900" fill="#e2b7a0"/><path d="M12 21Q13 17.500 16.500 18Q20 17.500 21 21Z" fill="#1c1c20"/></g></svg>
<svg style="left:307.500px;top:7px" width="17" height="17" viewBox="0 0 17 17"><defs><linearGradient id="ph1" x1="0" y1="0" x2="0" y2="1"><stop offset="0" stop-color="#2f9bf0"/><stop offset="1" stop-color="#1c62c8"/></linearGradient></defs><rect width="17" height="17" fill="url(#ph1)"/><circle cx="12" cy="4.500" r="1.800" fill="#fff"/><path d="M0 14L6.500 6.500L14 17H0Z" fill="#14419a"/><path d="M8 17L12.500 10.500L17 15V17Z" fill="#2a55c0"/></svg>
<svg style="left:828.500px;top:12px" width="9" height="6" viewBox="0 0 9 6"><path d="M0.500 5.500L4.500 1L8.500 5.500" stroke="#fff" stroke-width="1" fill="none"/></svg>
<svg style="left:846px;top:10px" width="13" height="9" viewBox="0 0 13 9"><rect x="3" y="2" width="8.500" height="5.500" stroke="#fff" stroke-width="1" fill="none"/><rect x="11.800" y="3.500" width="1.200" height="2.500" fill="#fff"/><path d="M1.500 0V3M3 0V3M0.500 3H4V5Q4 6 2.300 6V8.500" stroke="#fff" stroke-width="0.800" fill="none"/></svg>
<svg style="left:863.500px;top:9.500px" width="13" height="10" viewBox="0 0 13 10"><path d="M0.500 3.500H2.500L5 1V9L2.500 6.500H0.500Z" stroke="#fff" stroke-width="0.900" fill="none"/><path d="M6.800 3.500Q7.800 5 6.800 6.500M8.600 2.300Q10.300 5 8.600 7.700M10.500 1.200Q12.800 5 10.500 8.800" stroke="#fff" stroke-width="0.900" fill="none"/></svg>
<svg style="left:883px;top:9.500px" width="12" height="11" viewBox="0 0 12 11"><path d="M1 10A9 9 0 0 1 10 1M3.500 10A6.500 6.500 0 0 1 10 3.500M6 10A4 4 0 0 1 10 6" stroke="#d8e4f0" stroke-width="1" fill="none"/><circle cx="9.500" cy="9.500" r="1.200" fill="#fff"/></svg>
<svg style="left:902px;top:8px" width="9" height="13" viewBox="0 0 9 13"><rect x="2.500" y="0" width="4" height="8" rx="2" fill="#fff"/><path d="M0.800 6A3.700 3.700 0 0 0 8.200 6M4.500 10V12M2.500 12.500H6.500" stroke="#fff" stroke-width="0.900" fill="none"/></svg>
<div class="abs" id="lang" style="left:920px;top:9px;font-size:9px;line-height:12px;color:#fff;letter-spacing:-0.200px">УКР</div>
<div class="abs" id="tclk" style="left:946px;top:3px;width:44px;text-align:center;font-size:8.500px;line-height:12px;color:#fff;letter-spacing:-0.300px">15:01</div>
<div class="abs" id="tdate" style="left:946px;top:16px;width:44px;text-align:center;font-size:8.500px;line-height:12px;color:#fff;letter-spacing:-0.300px">01.03.2023</div>
<svg style="left:1002.500px;top:8.500px" width="13" height="13" viewBox="0 0 13 13"><path d="M0.500 0.500H12.500V9.500H8L6.500 11.500L5 9.500H0.500Z" stroke="#fff" stroke-width="1" fill="none"/></svg>
</div>
</body>
</html>
